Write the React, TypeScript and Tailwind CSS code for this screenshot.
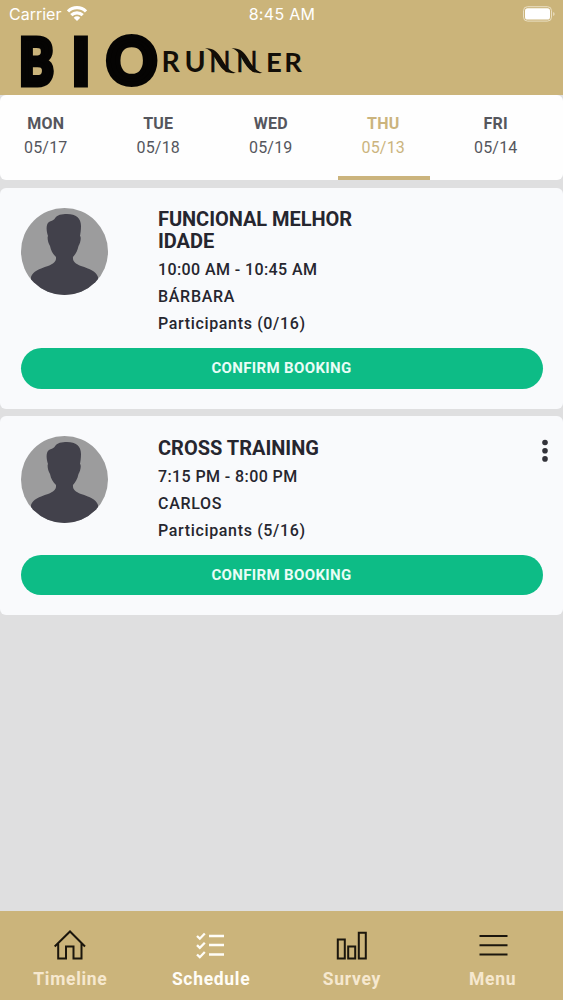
import { clsx } from 'clsx';

type Day = { label: string; date: string; active?: boolean };

type Lesson = {
    title: string;
    titleSpacing: string;
    time: string;
    coach: string;
    participants: string;
    hasMenu?: boolean;
};

const days: Day[] = [
    { label: 'MON', date: '05/17' },
    { label: 'TUE', date: '05/18' },
    { label: 'WED', date: '05/19' },
    { label: 'THU', date: '05/13', active: true },
    { label: 'FRI', date: '05/14' },
];

const lessons: Lesson[] = [
    {
        title: 'FUNCIONAL MELHOR IDADE',
        titleSpacing: 'tracking-[-0.050px]',
        time: '10:00 AM - 10:45 AM',
        coach: 'BÁRBARA',
        participants: 'Participants (0/16)',
    },
    {
        title: 'CROSS TRAINING',
        titleSpacing: 'tracking-normal',
        time: '7:15 PM - 8:00 PM',
        coach: 'CARLOS',
        participants: 'Participants (5/16)',
        hasMenu: true,
    },
];

function StatusBar() {
    return (
        <div className="grid h-7 grid-cols-3 items-center pl-[9px] pr-2 text-white">
            <div className="flex items-center gap-[6px]">
                <span className="font-[Inter,sans-serif] text-base leading-7">Carrier</span>
                <svg className="-mt-[2px] h-[15px] w-5" viewBox="0 0 20 15" fill="none" stroke="currentColor" strokeWidth="3.2">
                    <path d="M1 5.400a12.800 12.800 0 0 1 18 0" />
                    <path d="M4.300 9.200a8.200 8.200 0 0 1 11.400 0" />
                    <path d="M10 15 6.700 11.700a4.600 4.600 0 0 1 6.600 0z" fill="currentColor" stroke="none" />
                </svg>
            </div>
            <span className="whitespace-nowrap text-center font-[Inter,sans-serif] text-base leading-7 tracking-[0.3px]">
                8:45 AM
            </span>
            <svg className="-mt-px h-4 w-8 justify-self-end" viewBox="0 0 32 16">
                <rect x="0.500" y="0.700" width="28" height="14.400" rx="4" fill="none" stroke="#eadfc3" />
                <rect x="2" y="2.300" width="25" height="11.300" rx="2.600" fill="white" />
                <path d="M30.200 6v4q1.400-.7 1.400-2t-1.400-2" fill="#eadfc3" />
            </svg>
        </div>
    );
}

function Logo() {
    return (
        <svg className="h-[67px] w-[320px] overflow-visible" viewBox="0 28 320 67" role="img" aria-label="Bio Runner">
            <g fill="#050403" stroke="#050403" strokeWidth="5" fontFamily="Lato, sans-serif" fontSize="64" fontWeight="900">
                <text transform="translate(19 84.500) scale(0.82 1)">B</text>
                <text transform="translate(71.800 84.500) scale(0.95 1)">I</text>
                <text transform="translate(106.300 84.300) scale(0.98 1)">O</text>
            </g>
            <g fill="#120e08" fontFamily="Lato, sans-serif" fontSize="28.5">
                <text x="161.500 184.500" y="71.500" fontWeight="700">RU</text>
                <text x="209 236" y="71.500" fontWeight="400" stroke="#120e08" strokeWidth="0.5">NN</text>
                <text x="266 284.300" y="71.500" fontWeight="700" fontSize="27.5">ER</text>
            </g>
            {/* swashes running through both N letters */}
            <g fill="#120e08">
                <path d="M205 48.300c8-.6 12.500 3.500 16.500 10.200 4 7 7.500 12.500 14.500 14.500-8 1-13.500-2.500-18-10-4-7-6.500-13-13-14.700z" />
                <path d="M231.500 48.300c8-.6 12.500 3.500 16.500 10.200 4 7 7.500 12.500 14.500 14.500-8 1-13.500-2.500-18-10-4-7-6.500-13-13-14.700z" />
            </g>
        </svg>
    );
}

function DayTabs() {
    return (
        <nav className="flex h-[85px] gap-5 overflow-hidden rounded-md bg-[#fefefe]">
            {days.map((day) => (
                <button
                    key={day.label}
                    type="button"
                    className={clsx(
                        'flex w-[92.5px] shrink-0 flex-col items-center border-b-4 pr-[1px] pt-[17px] text-base leading-6',
                        day.active ? 'border-[#cbb47d] text-[#cbb47d]' : 'border-transparent text-[#55565d]'
                    )}
                >
                    <span className="font-bold tracking-[0.2px]">{day.label}</span>
                    <span className="tracking-[0.2px]">{day.date}</span>
                </button>
            ))}
        </nav>
    );
}

function Avatar() {
    return (
        <svg className="size-[87px] shrink-0 overflow-hidden rounded-full" viewBox="0 0 87 87">
            <rect width="87" height="87" fill="#9c9c9d" />
            <path
                fill="#42414b"
                d="M27 28C25 22 25 16 28 14C30 12.500 32 13 33.500 11C36 6.500 41 6 46 6C55 6 60 10 60 18C60 22 59.500 25 59 28C60.500 29 59.500 35 57.500 38C56.500 43 54.500 46 52 49C51.500 53 54 55.500 60 58C69 61 75 63 77 69V87H10V69C12 63 18 61 27 58C33 55.500 35.500 53 35 49C32 46 30 43 29 38C27 35 26 29 27 28Z"
            />
        </svg>
    );
}

function LessonCard({ lesson }: { lesson: Lesson }) {
    return (
        <article className="rounded-md bg-[#f9fafc] px-[20.5px] pb-5 pt-5 text-[#26262f]">
            <div className="flex items-start">
                <Avatar />
                <div className="ml-[50.5px] w-[210px] pt-[0.5px]">
                    <h2 className={clsx('text-xl font-bold leading-[22px]', lesson.titleSpacing)}>{lesson.title}</h2>
                    <div className="mt-[4px] whitespace-nowrap text-base font-medium leading-[27px]">
                        <p className="tracking-[0.4px]">{lesson.time}</p>
                        <p className="tracking-[0.7px]">{lesson.coach}</p>
                        <p className="tracking-[0.65px]">{lesson.participants}</p>
                    </div>
                </div>
                {lesson.hasMenu && (
                    <button type="button" aria-label="Options" className="-mr-[6px] ml-auto mt-[3px]">
                        <svg className="h-6 w-2" viewBox="0 0 8 24" fill="#33333a">
                            <circle cx="4" cy="3.500" r="2.800" />
                            <circle cx="4" cy="11.700" r="2.800" />
                            <circle cx="4" cy="19.900" r="2.800" />
                        </svg>
                    </button>
                )}
            </div>
            <button
                type="button"
                className="mt-[11px] h-[40.5px] w-full rounded-full bg-[#0dbc86] text-[15px] font-bold leading-5 tracking-[0.35px] text-[#e9fdf6]"
            >
                CONFIRM BOOKING
            </button>
        </article>
    );
}

const navItems = [
    {
        label: 'Timeline',
        icon: (
            <path d="M.7 17.500 16 2.500l15 15M4.200 14.500V29.500h7.800V17.500h7.500v12h8V14.500" strokeWidth="2" />
        ),
    },
    {
        label: 'Schedule',
        active: true,
        icon: (
            <path d="M15 7h15M15 16h15M15 25.500h15M3 7l2.800 2.700 5-5.200M3 16.200l2.800 2.700 5-5.200M3 25.500l2.800 2.700 5-5.200" strokeWidth="2.3" />
        ),
    },
    {
        label: 'Survey',
        icon: (
            <path d="M2.800 10.500h7V29.500h-7zM13.200 17.500h7v12h-7zM23.800 3.800h7v25.700h-7z" strokeWidth="2" />
        ),
    },
    {
        label: 'Menu',
        icon: <path d="M3.500 7h28M3.500 16.200h28M3.500 25.500h28" strokeWidth="2.1" />,
    },
];

function BottomNav() {
    return (
        <nav className="grid h-[89px] grid-cols-4 bg-[#cbb47b]">
            {navItems.map((item) => (
                <button
                    key={item.label}
                    type="button"
                    className={clsx(
                        'flex flex-col items-center pr-[1.5px] pt-[17.5px] text-[17.5px] font-bold leading-6',
                        item.active ? 'text-[#fffdf7]' : 'text-[#f6e8cf]'
                    )}
                >
                    <svg
                        className={clsx('h-8 w-8', item.active ? 'text-[#fffdf7]' : 'text-[#1b160d]')}
                        viewBox="0 0 32 32"
                        fill="none"
                        stroke="currentColor"
                    >
                        {item.icon}
                    </svg>
                    <span className="ml-[1.5px] mt-[6px] tracking-[0.7px]">{item.label}</span>
                </button>
            ))}
        </nav>
    );
}

export default function App() {
    return (
        <div className="flex h-screen flex-col overflow-hidden bg-[#dfdfe0] font-[Roboto,sans-serif]">
            <header className="h-[95px] shrink-0 bg-[#cbb47a]">
                <StatusBar />
                <Logo />
            </header>
            <main className="flex flex-1 flex-col gap-[7.5px]">
                <DayTabs />
                {lessons.map((lesson) => (
                    <LessonCard key={lesson.title} lesson={lesson} />
                ))}
            </main>
            <BottomNav />
        </div>
    );
}
